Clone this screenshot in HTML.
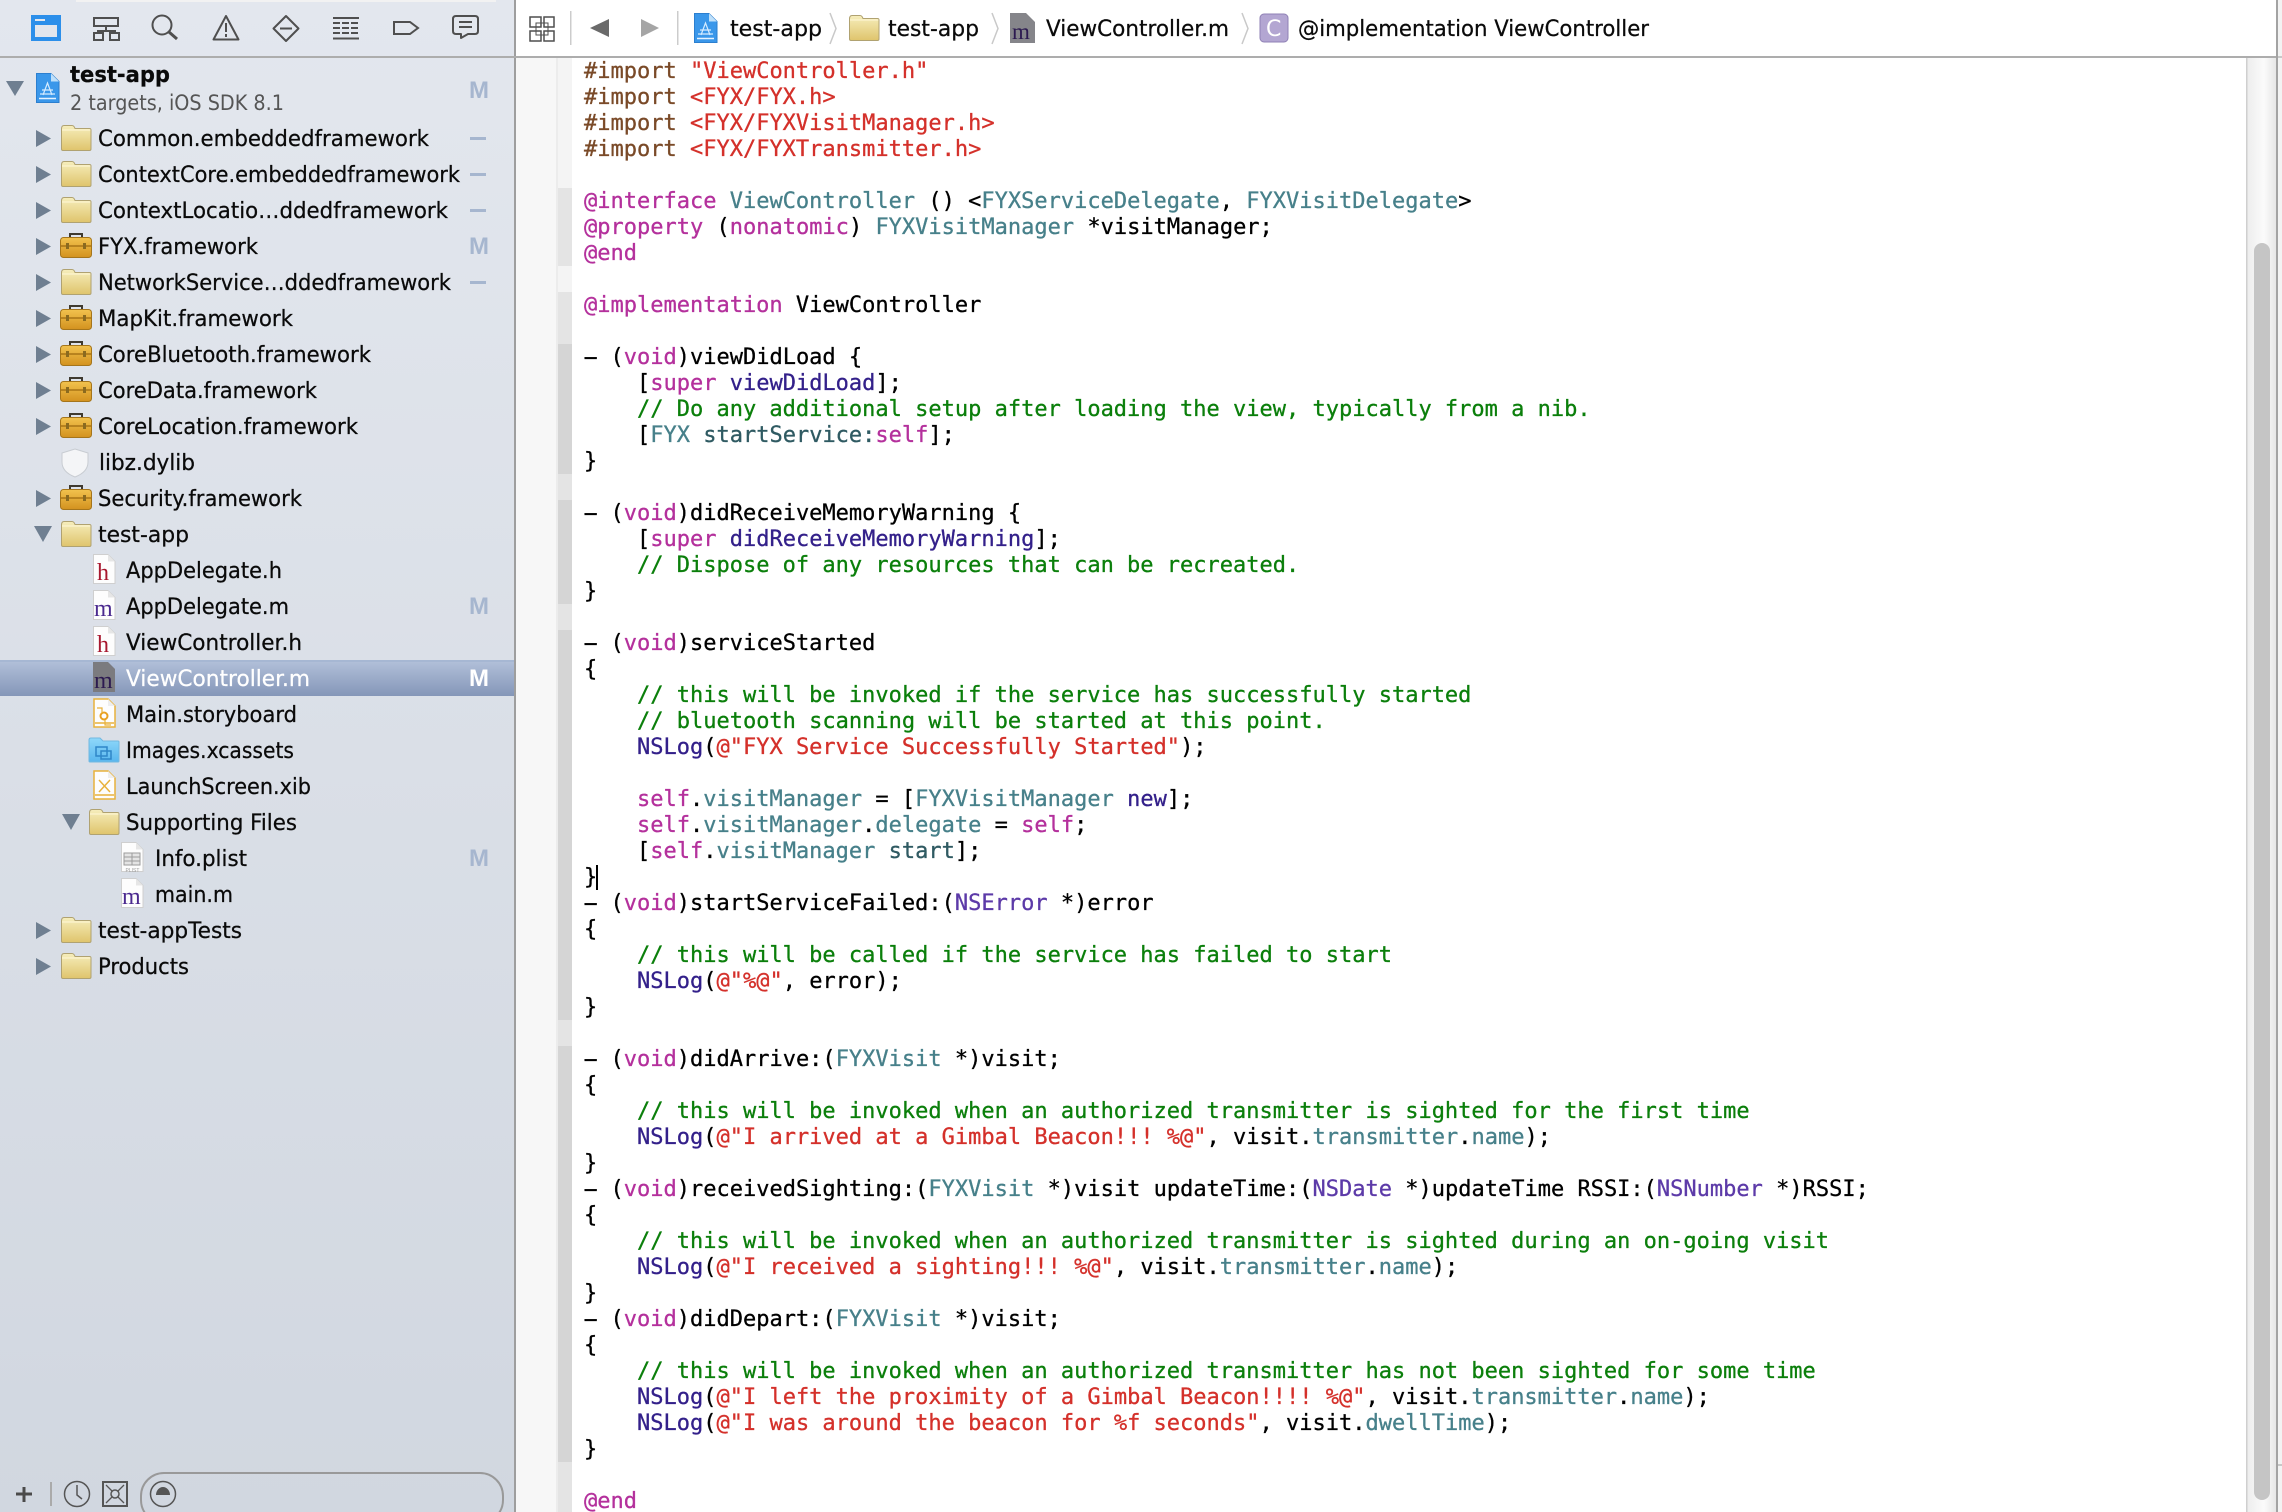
<!DOCTYPE html>
<html lang="en"><head><meta charset="utf-8"><title>Xcode</title>
<style>
html,body{margin:0;padding:0;background:#fff}
#r{position:relative;width:2282px;height:1512px;overflow:hidden;background:#fff}
svg{position:absolute;left:0;top:0}
.l{font-family:"DejaVu Sans","Liberation Sans",sans-serif;font-size:22px;fill:#0a0a0a;stroke:#0a0a0a;stroke-width:.25px}
pre{position:absolute;left:584px;top:58.5px;margin:0;font-family:"DejaVu Sans Mono","Liberation Mono",monospace;font-size:22px;line-height:26px;color:#000;white-space:pre;-webkit-text-stroke:.3px}
.k{color:#b4309c}.p{color:#7a4a28}.s{color:#d4302a}.c{color:#0b7f0b}.t{color:#47808a}.m{color:#2f5a62}.y{color:#5c3aa8}.n{color:#33208a}
.d{display:inline-block;transform:scaleX(2.1)}
#caret{position:absolute;left:596px;top:865px;width:2px;height:25px;background:#000}
</style></head><body><div id="r">
<svg width="2282" height="1512" viewBox="0 0 2282 1512" xmlns="http://www.w3.org/2000/svg">
<defs>
<linearGradient id="sb" x1="0" y1="0" x2="0" y2="1"><stop offset="0" stop-color="#e3e7ee"/><stop offset="1" stop-color="#d1d7e0"/></linearGradient>
<linearGradient id="sel" x1="0" y1="0" x2="0" y2="1"><stop offset="0" stop-color="#b3c1da"/><stop offset="1" stop-color="#8496b8"/></linearGradient>
<linearGradient id="fo" x1="0" y1="0" x2="0" y2="1"><stop offset="0" stop-color="#f6eebc"/><stop offset="1" stop-color="#dfc46c"/></linearGradient>
<linearGradient id="tb" x1="0" y1="0" x2="0" y2="1"><stop offset="0" stop-color="#f2c24e"/><stop offset="1" stop-color="#d3921f"/></linearGradient>
<linearGradient id="bf" x1="0" y1="0" x2="0" y2="1"><stop offset="0" stop-color="#8fd8fa"/><stop offset="1" stop-color="#58b6ee"/></linearGradient>
<linearGradient id="track" x1="0" y1="0" x2="1" y2="0"><stop offset="0" stop-color="#ececec"/><stop offset=".6" stop-color="#fbfbfb"/><stop offset="1" stop-color="#e6e6e6"/></linearGradient>
<g id="folder"><path d="M.5 4Q.5 .5 3 .5H11Q13 .5 14 3.5H28.5Q30 3.5 30 5V24Q30 25.5 28.5 25.5H2Q.5 25.5 .5 24Z" fill="url(#fo)" stroke="#b0a271"/><path d="M1 5H29.5" stroke="#fff8d8"/></g>
<g id="tool"><path d="M10 6V2H22V6" fill="none" stroke="#3f3a30" stroke-width="2"/><rect x=".5" y="5.5" width="31" height="20" rx="3" fill="url(#tb)" stroke="#a5751b"/><path d="M1 14H31" stroke="#a87416" stroke-width="1.5"/><rect x="6" y="11" width="3" height="6" fill="#8a6a20"/><rect x="23" y="11" width="3" height="6" fill="#8a6a20"/></g>
<path id="tr" d="M36 130L51 138.5L36 147Z" fill="#6f7f91"/>
<path id="td" d="M34 526H52L43 542Z" fill="#6f7f91"/>
<g id="page"><path d="M.5 .5H15L22 7.5V29.5H.5Z" fill="#fdfdfd" stroke="#cfcfcf"/><path d="M15 .5V7.5H22Z" fill="#e6e6e6"/></g>
<g id="ypage"><path d="M1 1H15L22 8V29H1Z" fill="#fdfdfd" stroke="#e8b23c" stroke-width="1.5"/><path d="M15 1V8H22Z" fill="#eee"/><path d="M2 25H21" stroke="#e8b23c" stroke-width="1.5"/></g>
<g id="proj"><path d="M.5 .5H15L23 8.5V29.5H.5Z" fill="#3a97ea" stroke="#2c7fcf"/><path d="M15 .5V8.5H23Z" fill="#bfe0fa"/><path d="M3 25.5H20" stroke="#e6f3ff" stroke-width="1.5"/><path d="M7 22L11.5 10L16 22M6 17H17M4 21H19" fill="none" stroke="#d5ebff" stroke-width="1.2"/></g>
</defs>

<!-- sidebar -->
<rect x="0" y="0" width="514" height="1512" fill="url(#sb)"/>
<rect x="76" y="0" width="420" height="2" fill="#f2f2f2"/>
<rect x="514" y="0" width="2" height="1512" fill="#9e9e9e"/>
<rect x="0" y="56" width="2282" height="2" fill="#adadad"/>

<!-- navigator icons -->
<path d="M31 15H61V41H31Z" fill="#2c8fea"/><path d="M35 19H45V21H35ZM35 25H57V37H35Z" fill="#e2e6ed"/>
<g fill="none" stroke="#4f4f4f" stroke-width="2">
<rect x="94" y="18" width="24" height="8"/><path d="M106 26V31M98 33V31H115V33"/><rect x="94" y="33" width="9" height="7"/><rect x="110" y="33" width="9" height="7"/>
<circle cx="162" cy="25" r="9.5"/><path d="M169 32L177 39" stroke-width="3"/>
<path d="M226 16L238.500 39.500H213.500Z" stroke-linejoin="round"/><path d="M226 23V32M226 34V37"/>
<path d="M286 16L298.500 28.500L286 41L273.500 28.500Z" stroke-linejoin="round"/><path d="M280 28.500H292"/>
<path d="M333 18H359M333 38.500H359"/><path d="M333 23H359M333 28H359M333 33H359" stroke-dasharray="7 2"/>
<path d="M394 22H410L418 28L410 34H394Z"/>
<path d="M456 16H475Q478 16 478 19V31Q478 34 475 34H468L461 38V34H456Q453 34 453 31V19Q453 16 456 16Z" stroke-linejoin="round"/><path d="M459 22H472M459 27H472"/>
</g>

<!-- selection -->
<rect x="0" y="660" width="514" height="36" fill="url(#sel)"/><rect x="0" y="660" width="514" height="2" fill="#a6b7d3"/>

<!-- triangles -->
<path d="M6 81H24L15 96Z" fill="#6f7f91"/>
<use href="#tr"/><use href="#tr" y="36"/><use href="#tr" y="72"/><use href="#tr" y="108"/><use href="#tr" y="144"/><use href="#tr" y="180"/><use href="#tr" y="216"/><use href="#tr" y="252"/><use href="#tr" y="288"/><use href="#tr" y="360"/><use href="#tr" y="792"/><use href="#tr" y="828"/>
<use href="#td"/><use href="#td" x="28" y="288"/>

<!-- project -->
<use href="#proj" x="36" y="73"/>

<!-- folders and toolboxes -->
<use href="#folder" x="61" y="125"/><use href="#folder" x="61" y="161"/><use href="#folder" x="61" y="197"/><use href="#tool" x="60" y="232"/><use href="#folder" x="61" y="269"/><use href="#tool" x="60" y="304"/><use href="#tool" x="60" y="340"/><use href="#tool" x="60" y="376"/><use href="#tool" x="60" y="412"/><use href="#tool" x="60" y="484"/><use href="#folder" x="61" y="521"/><use href="#folder" x="89" y="809"/><use href="#folder" x="61" y="917"/><use href="#folder" x="61" y="953"/>

<!-- libz shield -->
<path d="M75 449L88 453V462Q88 472 75 477Q62 472 62 462V453Z" fill="#f4f5f7" stroke="#c8ccd2"/>

<!-- files -->
<use href="#page" x="93" y="554"/><text x="97" y="580" font-family="Liberation Serif,serif" font-size="24" fill="#a8182f">h</text>
<use href="#page" x="93" y="590"/><text x="94" y="616" font-family="Liberation Serif,serif" font-size="24" fill="#4b2a8f">m</text>
<use href="#page" x="93" y="626"/><text x="97" y="652" font-family="Liberation Serif,serif" font-size="24" fill="#a8182f">h</text>
<path d="M93 662H108L115 669V692H93Z" fill="#7b7b7f"/><text x="94" y="688" font-family="Liberation Serif,serif" font-size="24" fill="#2c1a50">m</text>
<use href="#ypage" x="93" y="698"/><circle cx="104" cy="716" r="3.500" fill="none" stroke="#e8a020" stroke-width="2"/><path d="M97 708H102V713M105 720V725H111" fill="none" stroke="#e8b23c" stroke-width="1.200"/>
<path d="M89 740Q89 738 91 738H100L103 741H118Q119 741 119 742V761Q119 762 118 762H90Q89 762 89 761Z" fill="url(#bf)" stroke="#72b8e0"/><rect x="96" y="747" width="11" height="9" fill="none" stroke="#2f86c8" stroke-width="1.500"/><rect x="101" y="751" width="10" height="8" fill="none" stroke="#2f86c8" stroke-width="1.500"/>
<use href="#ypage" x="93" y="770"/><path d="M99 780L110 792M110 780L99 792" stroke="#e8b23c" stroke-width="1.500"/>
<use href="#page" x="121" y="842"/><path d="M124 853H140V865H124ZM124 857H140M124 861H140M132 853V865" fill="#e4e4e4" stroke="#9c9c9c" stroke-width="1"/><text x="125.500" y="872" font-family="Liberation Sans,sans-serif" font-size="5" fill="#999">PLIST</text>
<use href="#page" x="121" y="878"/><text x="122" y="904" font-family="Liberation Serif,serif" font-size="24" fill="#4b2a8f">m</text>

<!-- labels -->
<text class="l" x="70" y="82" font-weight="bold" textLength="100" lengthAdjust="spacingAndGlyphs">test-app</text>
<text class="l" x="70" y="110" style="fill:#555;stroke:none;font-size:21px" textLength="214" lengthAdjust="spacingAndGlyphs">2 targets, iOS SDK 8.1</text>
<text class="l" x="98" y="146" textLength="331" lengthAdjust="spacingAndGlyphs">Common.embeddedframework</text>
<text class="l" x="98" y="182" textLength="362" lengthAdjust="spacingAndGlyphs">ContextCore.embeddedframework</text>
<text class="l" x="98" y="218" textLength="350" lengthAdjust="spacingAndGlyphs">ContextLocatio…ddedframework</text>
<text class="l" x="98" y="254" textLength="160" lengthAdjust="spacingAndGlyphs">FYX.framework</text>
<text class="l" x="98" y="290" textLength="353" lengthAdjust="spacingAndGlyphs">NetworkService…ddedframework</text>
<text class="l" x="98" y="326" textLength="195" lengthAdjust="spacingAndGlyphs">MapKit.framework</text>
<text class="l" x="98" y="362" textLength="273" lengthAdjust="spacingAndGlyphs">CoreBluetooth.framework</text>
<text class="l" x="98" y="398" textLength="219" lengthAdjust="spacingAndGlyphs">CoreData.framework</text>
<text class="l" x="98" y="434" textLength="260" lengthAdjust="spacingAndGlyphs">CoreLocation.framework</text>
<text class="l" x="99" y="470" textLength="96" lengthAdjust="spacingAndGlyphs">libz.dylib</text>
<text class="l" x="98" y="506" textLength="204" lengthAdjust="spacingAndGlyphs">Security.framework</text>
<text class="l" x="98" y="542" textLength="91" lengthAdjust="spacingAndGlyphs">test-app</text>
<text class="l" x="126" y="578" textLength="156" lengthAdjust="spacingAndGlyphs">AppDelegate.h</text>
<text class="l" x="126" y="614" textLength="163" lengthAdjust="spacingAndGlyphs">AppDelegate.m</text>
<text class="l" x="126" y="650" textLength="176" lengthAdjust="spacingAndGlyphs">ViewController.h</text>
<text class="l" x="126" y="686" textLength="184" lengthAdjust="spacingAndGlyphs" style="fill:#fff;stroke:#fff">ViewController.m</text>
<text class="l" x="126" y="722" textLength="171" lengthAdjust="spacingAndGlyphs">Main.storyboard</text>
<text class="l" x="126" y="758" textLength="168" lengthAdjust="spacingAndGlyphs">Images.xcassets</text>
<text class="l" x="126" y="794" textLength="185" lengthAdjust="spacingAndGlyphs">LaunchScreen.xib</text>
<text class="l" x="126" y="830" textLength="171" lengthAdjust="spacingAndGlyphs">Supporting Files</text>
<text class="l" x="155" y="866" textLength="92" lengthAdjust="spacingAndGlyphs">Info.plist</text>
<text class="l" x="155" y="902" textLength="78" lengthAdjust="spacingAndGlyphs">main.m</text>
<text class="l" x="98" y="938" textLength="144" lengthAdjust="spacingAndGlyphs">test-appTests</text>
<text class="l" x="98" y="974" textLength="91" lengthAdjust="spacingAndGlyphs">Products</text>

<!-- SCM status -->
<g font-family="Liberation Sans,sans-serif" font-weight="bold" font-size="24" fill="#a6b6cf">
<text x="469" y="98">M</text><text x="469" y="254">M</text><text x="469" y="614">M</text><text x="469" y="866">M</text><text x="469" y="686" fill="#fff">M</text>
</g>
<path d="M470 138.500H486M470 174.500H486M470 210.500H486M470 282.500H486" stroke="#a6b6cf" stroke-width="3"/>

<!-- sidebar footer -->
<path d="M16 1494H32M24 1487V1502" stroke="#4a4a4a" stroke-width="3"/>
<rect x="50" y="1482" width="2" height="24" fill="#aaa"/>
<circle cx="77" cy="1494" r="12.500" fill="none" stroke="#555" stroke-width="1.500"/><path d="M77 1485V1495L82 1499" fill="none" stroke="#555" stroke-width="1.500"/>
<rect x="103" y="1482" width="24" height="24" fill="none" stroke="#555" stroke-width="2"/><circle cx="115" cy="1494" r="4" fill="none" stroke="#555" stroke-width="1.500"/><path d="M106 1485L112 1491M124 1485L118 1491M106 1503L112 1497M124 1503L118 1497" stroke="#555" stroke-width="1.300"/>
<rect x="141" y="1473" width="362" height="50" rx="23" fill="none" stroke="#999" stroke-width="2"/>
<circle cx="163" cy="1494" r="12.500" fill="none" stroke="#555" stroke-width="1.500"/><path d="M156 1495A7 8 0 0 1 170 1495Z" fill="#555"/>

<!-- jump bar -->
<g fill="none" stroke="#4f4f4f" stroke-width="1.500"><path d="M530 17H541V27H530ZM544 17H554V27H544ZM530 31H541V41H530ZM544 31H554V41H544Z"/><path d="M536 23H548V35H536Z" stroke-width="1"/></g>
<rect x="570" y="11" width="1.500" height="34" fill="#ccc"/><rect x="677" y="11" width="1.500" height="34" fill="#ccc"/>
<path d="M609 19V37L590 28Z" fill="#6a6a6a"/><path d="M641 19V37L659 28Z" fill="#a5a5a5"/>
<use href="#proj" x="694" y="13"/>
<use href="#folder" x="849" y="15"/>
<path d="M1010 13H1026L1035 22V43H1010Z" fill="#85858a"/><text x="1012" y="39" font-family="Liberation Serif,serif" font-size="23" fill="#2c1a50">m</text>
<rect x="1260" y="14" width="28" height="28" rx="4" fill="#b3a6d2" stroke="#8f80b5"/><text x="1266" y="36" font-family="DejaVu Sans,sans-serif" font-size="22" fill="#fff">C</text>
<path d="M830 13L836 28.500L830 44M992 13L998 28.500L992 44M1242 13L1248 28.500L1242 44" fill="none" stroke="#c9c9c9" stroke-width="1.500"/>
<g class="bc">
<text class="l" x="730" y="36" textLength="92" lengthAdjust="spacingAndGlyphs">test-app</text>
<text class="l" x="888" y="36" textLength="91" lengthAdjust="spacingAndGlyphs">test-app</text>
<text class="l" x="1046" y="36" textLength="183" lengthAdjust="spacingAndGlyphs">ViewController.m</text>
<text class="l" x="1298" y="36" textLength="351" lengthAdjust="spacingAndGlyphs">@implementation ViewController</text>
</g>

<!-- gutter -->
<rect x="516" y="58" width="40" height="1454" fill="#f7f7f7"/><rect x="556" y="58" width="2" height="1454" fill="#ececec"/>
<rect x="558" y="58" width="14" height="130" fill="#f4f4f4"/>
<rect x="558" y="188" width="14" height="78" fill="#e4e4e4"/>
<rect x="558" y="266" width="14" height="26" fill="#f4f4f4"/>
<rect x="558" y="292" width="14" height="52" fill="#e4e4e4"/>
<rect x="558" y="344" width="14" height="130" fill="#d5d5d5"/>
<rect x="558" y="474" width="14" height="26" fill="#e4e4e4"/>
<rect x="558" y="500" width="14" height="104" fill="#d5d5d5"/>
<rect x="558" y="604" width="14" height="26" fill="#e4e4e4"/>
<rect x="558" y="630" width="14" height="390" fill="#d5d5d5"/>
<rect x="558" y="1020" width="14" height="26" fill="#e4e4e4"/>
<rect x="558" y="1046" width="14" height="416" fill="#d5d5d5"/>
<rect x="558" y="1462" width="14" height="50" fill="#e4e4e4"/>

<!-- right edge and scrollbar -->
<rect x="2246" y="58" width="30" height="1454" fill="url(#track)"/><rect x="2246" y="58" width="1.500" height="1454" fill="#cfcfcf"/>
<rect x="2276" y="0" width="2" height="1512" fill="#a3a3a3"/><rect x="2278" y="0" width="4" height="1512" fill="#f3f3f3"/>
<rect x="2278" y="1464" width="4" height="2" fill="#c8c8c8"/><rect x="2278" y="56" width="4" height="2" fill="#c8c8c8"/>
<rect x="2254" y="243" width="16" height="1257" rx="8" fill="#c5c5c5"/>
</svg>
<pre><span class="p">#import</span> <span class="s">"ViewController.h"</span>
<span class="p">#import</span> <span class="s">&lt;FYX/FYX.h&gt;</span>
<span class="p">#import</span> <span class="s">&lt;FYX/FYXVisitManager.h&gt;</span>
<span class="p">#import</span> <span class="s">&lt;FYX/FYXTransmitter.h&gt;</span>

<span class="k">@interface</span> <span class="t">ViewController</span> () &lt;<span class="t">FYXServiceDelegate</span>, <span class="t">FYXVisitDelegate</span>&gt;
<span class="k">@property</span> (<span class="k">nonatomic</span>) <span class="t">FYXVisitManager</span> *visitManager;
<span class="k">@end</span>

<span class="k">@implementation</span> ViewController

<span class="d">-</span> (<span class="k">void</span>)viewDidLoad {
    [<span class="k">super</span> <span class="n">viewDidLoad</span>];
    <span class="c">// Do any additional setup after loading the view, typically from a nib.</span>
    [<span class="t">FYX</span> <span class="m">startService:</span><span class="k">self</span>];
}

<span class="d">-</span> (<span class="k">void</span>)didReceiveMemoryWarning {
    [<span class="k">super</span> <span class="n">didReceiveMemoryWarning</span>];
    <span class="c">// Dispose of any resources that can be recreated.</span>
}

<span class="d">-</span> (<span class="k">void</span>)serviceStarted
{
    <span class="c">// this will be invoked if the service has successfully started</span>
    <span class="c">// bluetooth scanning will be started at this point.</span>
    <span class="n">NSLog</span>(<span class="s">@"FYX Service Successfully Started"</span>);

    <span class="k">self</span>.<span class="t">visitManager</span> = [<span class="t">FYXVisitManager</span> <span class="n">new</span>];
    <span class="k">self</span>.<span class="t">visitManager</span>.<span class="t">delegate</span> = <span class="k">self</span>;
    [<span class="k">self</span>.<span class="t">visitManager</span> <span class="m">start</span>];
}
<span class="d">-</span> (<span class="k">void</span>)startServiceFailed:(<span class="y">NSError</span> *)error
{
    <span class="c">// this will be called if the service has failed to start</span>
    <span class="n">NSLog</span>(<span class="s">@"%@"</span>, error);
}

<span class="d">-</span> (<span class="k">void</span>)didArrive:(<span class="t">FYXVisit</span> *)visit;
{
    <span class="c">// this will be invoked when an authorized transmitter is sighted for the first time</span>
    <span class="n">NSLog</span>(<span class="s">@"I arrived at a Gimbal Beacon!!! %@"</span>, visit.<span class="t">transmitter</span>.<span class="t">name</span>);
}
<span class="d">-</span> (<span class="k">void</span>)receivedSighting:(<span class="t">FYXVisit</span> *)visit updateTime:(<span class="y">NSDate</span> *)updateTime RSSI:(<span class="y">NSNumber</span> *)RSSI;
{
    <span class="c">// this will be invoked when an authorized transmitter is sighted during an on-going visit</span>
    <span class="n">NSLog</span>(<span class="s">@"I received a sighting!!! %@"</span>, visit.<span class="t">transmitter</span>.<span class="t">name</span>);
}
<span class="d">-</span> (<span class="k">void</span>)didDepart:(<span class="t">FYXVisit</span> *)visit;
{
    <span class="c">// this will be invoked when an authorized transmitter has not been sighted for some time</span>
    <span class="n">NSLog</span>(<span class="s">@"I left the proximity of a Gimbal Beacon!!!! %@"</span>, visit.<span class="t">transmitter</span>.<span class="t">name</span>);
    <span class="n">NSLog</span>(<span class="s">@"I was around the beacon for %f seconds"</span>, visit.<span class="t">dwellTime</span>);
}

<span class="k">@end</span></pre>
<div id="caret"></div>
</div></body></html>
